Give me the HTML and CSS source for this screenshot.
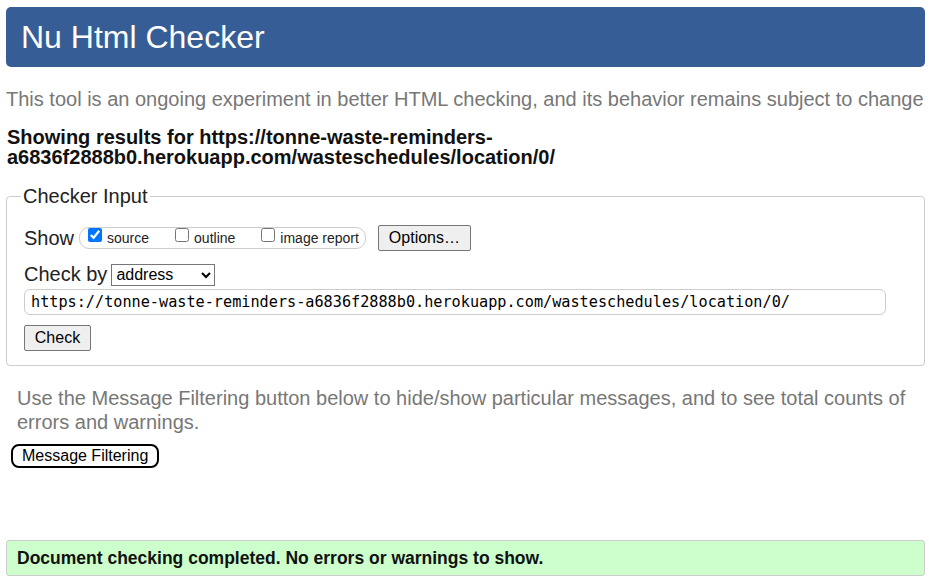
FILE: index.html
```html
<!DOCTYPE html>
<html>
<head>
<meta charset="utf-8">
<title>Nu Html Checker</title>
<link rel="stylesheet" href="styles.css">
</head>
<body>
<header class="banner"><h1 class="title">Nu Html Checker</h1></header>
<p class="intro">This tool is an ongoing experiment in better HTML checking, and its behavior remains subject to change</p>
<p class="results">Showing results for https://tonne-waste-reminders-<br>a6836f2888b0.herokuapp.com/wasteschedules/location/0/</p>
<fieldset class="checker">
  <legend class="legend">Checker Input</legend>
  <div class="row show-row">
    <span class="label">Show</span>
    <span class="opts">
      <label class="opt"><input type="checkbox" checked> source</label>
      <label class="opt"><input type="checkbox"> outline</label>
      <label class="opt"><input type="checkbox"> image report</label>
    </span>
    <button class="btn options">Options…</button>
  </div>
  <div class="row by-row">
    <span class="label">Check by</span>
    <select class="select"><option>address</option></select>
  </div>
  <input class="url" type="text" value="https://tonne-waste-reminders-a6836f2888b0.herokuapp.com/wasteschedules/location/0/">
  <div class="row check-row"><button class="btn check">Check</button></div>
</fieldset>
<p class="filter-note">Use the Message Filtering button below to hide/show particular messages, and to see total counts of errors and warnings.</p>
<button class="filter-btn">Message Filtering</button>
<div class="success">Document checking completed. No errors or warnings to show.</div>
</body>
</html>
```
FILE: styles.css
```css
html, body { margin: 0; background: #fff; }
body {
  padding: 7px 4px 0 6px;
  font-family: "Liberation Sans", Arial, sans-serif;
  color: #000;
}
.banner {
  background: #365d95;
  border-radius: 5px;
  height: 60px;
  display: flex;
  align-items: center;
  padding-left: 15px;
}
.title {
  margin: 0;
  color: #fff;
  font-weight: normal;
  font-size: 32px;
}
.intro {
  margin: 20px 0 0 0;
  color: #777;
  font-size: 20px;
  line-height: 24px;
}
.results {
  margin: 16px 0 0 1px;
  font-weight: bold;
  font-size: 20px;
  line-height: 20px;
  color: #111;
}
.checker {
  margin: 18px 0 0 0;
  border: 1px solid #ccc;
  border-radius: 4px;
  padding: 4px 17px 14px 17px;
}
.legend {
  font-size: 20px;
  padding: 0 2px;
  margin-left: -3px;
  color: #222;
}
.row { display: flex; align-items: center; }
.show-row { margin-top: 13px; }
.label { font-size: 20px; color: #222; }
.opts {
  margin-left: 5px;
  border: 1px solid #ccc;
  border-radius: 10px;
  height: 20px;
  display: flex;
  align-items: center;
  padding: 0 6px 0 6px;
  gap: 24px;
  font-size: 14px;
  color: #222;
}
.opt { display: flex; align-items: center; }
.opt input { margin: 0 5px 0 2px; width: 14px; height: 14px; position: relative; top: -3px; }
.btn {
  font-family: "Liberation Sans", Arial, sans-serif;
  font-size: 16px;
  background: #efefef;
  border: 1px solid #767676;
  border-radius: 2px;
  color: #000;
  padding: 0 9px;
  height: 26px;
}
.options { margin-left: 12px; width: 93px; }
.by-row { margin-top: 12px; }
.select {
  margin-left: 4px;
  font-family: "Liberation Sans", Arial, sans-serif;
  font-size: 16px;
  height: 22px;
  width: 104px;
  border: 1px solid #767676;
  border-radius: 0;
  background: #fff;
  color: #000;
}
.url {
  display: block;
  margin-top: 3px;
  width: 862px;
  height: 26px;
  box-sizing: border-box;
  border: 1px solid #ccc;
  border-radius: 6px;
  padding: 0 6px;
  font-family: "DejaVu Sans Mono", monospace;
  font-size: 15.2px;
  color: #000;
}
.check-row { margin-top: 10px; }
.check { width: 67px; }
.filter-note {
  margin: 20px 0 0 11px;
  color: #777;
  font-size: 20px;
  line-height: 24px;
}
.filter-btn {
  display: block;
  margin: 10px 0 0 5px;
  font-family: "Liberation Sans", Arial, sans-serif;
  font-size: 16px;
  background: #fff;
  border: 2px solid #000;
  border-radius: 8px;
  padding: 0 9px;
  height: 24px;
  color: #000;
}
.success {
  margin-top: 72px;
  background: #ccffcc;
  border: 1px solid #ccc;
  border-radius: 3px;
  height: 36px;
  box-sizing: border-box;
  padding-left: 10px;
  display: flex;
  align-items: center;
  font-weight: bold;
  font-size: 17.5px;
  color: #111;
}
```
